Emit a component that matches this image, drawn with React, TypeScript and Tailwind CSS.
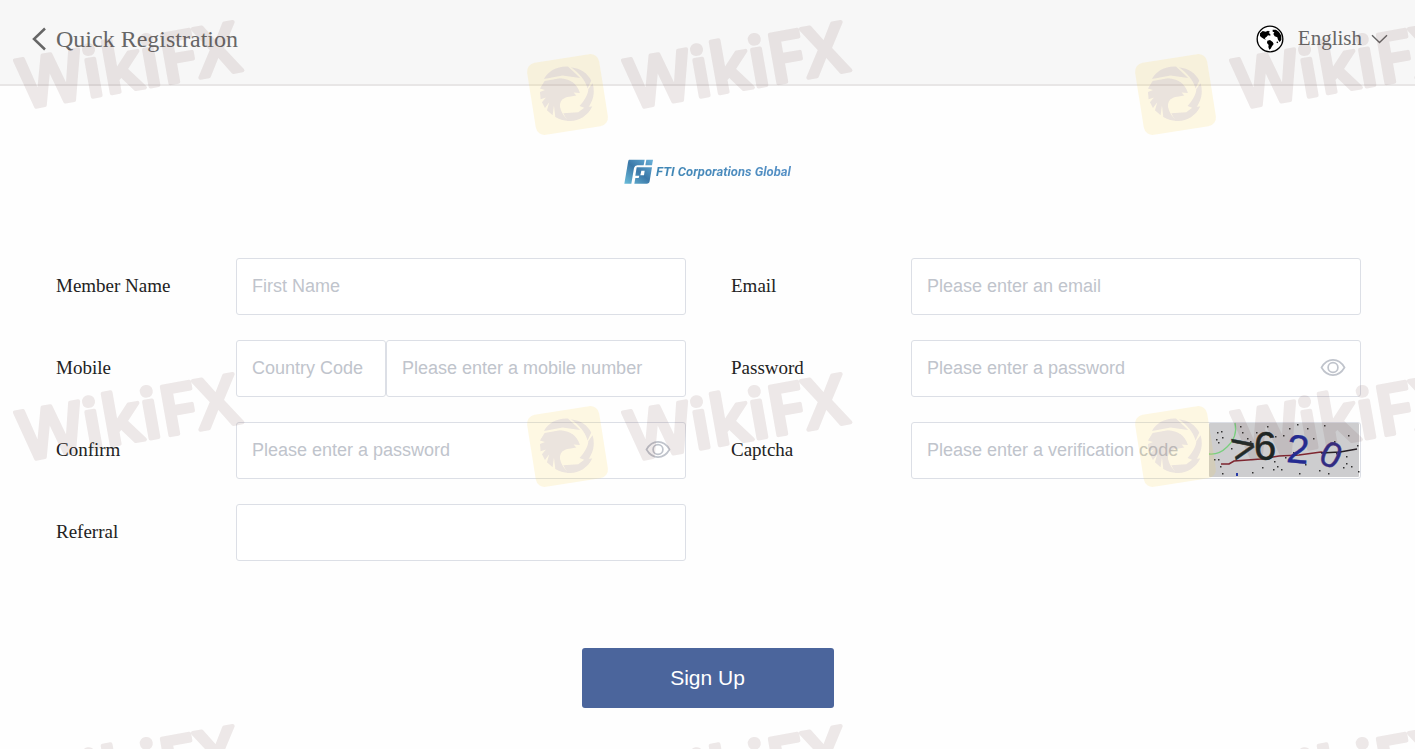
import type { ReactNode } from "react";

const serif = "font-['Liberation_Serif',serif]";
const sans = "font-['Liberation_Sans',sans-serif]";
const box = "flex h-[57px] min-w-0 items-stretch rounded-[3px] border border-[#dcdfe6] bg-white";
const field =
  "h-full w-full min-w-0 flex-1 bg-transparent pl-[15px] text-[18px] text-[#606266] outline-none placeholder:text-[#c0c4cc] font-['Liberation_Sans',sans-serif]";

function Row({ id, label, children }: { id: string; label: string; children: ReactNode }) {
  return (
    <div className="flex items-center">
      <label htmlFor={id} className={`w-[180px] shrink-0 text-[19px] text-[#222] ${serif}`}>
        {label}
      </label>
      <div className="flex min-w-0 flex-1">{children}</div>
    </div>
  );
}

function EyeButton() {
  return (
    <button type="button" aria-label="Show password" className="flex w-[54px] shrink-0 items-center justify-center pb-[2px]">
      <svg width="26" height="19" viewBox="0 0 26 19" fill="none" stroke="#c0c4cc" strokeWidth="1.700">
        <path d="M1.500 9.500C4.500 4.300 8.400 1.900 13 1.900s8.500 2.400 11.500 7.600C21.500 14.700 17.600 17.100 13 17.100S4.500 14.700 1.500 9.500Z" />
        <circle cx="13" cy="9.500" r="4.900" />
      </svg>
    </button>
  );
}

function Globe() {
  return (
    <svg width="28" height="28" viewBox="0 0 84 84" aria-hidden="true">
      <circle cx="42" cy="42" r="38.500" fill="#fff" stroke="#000" strokeWidth="4" />
      <path d="M12 25 20 18 29 20 36 17 42 20 38 24 43 27 43 32 36 31 32 35 26 40 30 44 24 42 16 37 12 33Z" />
      <path d="M34 47 42 45 50 51 53 57 48 64 44 71 40 74 37 66 38 60 33 54Z" />
      <path d="M50 14 60 14 69 21 76 32 76 45 71 51 66 44 64 37 56 34 52 27 55 22 50 20Z" />
      <circle cx="64" cy="52" r="2.500" />
    </svg>
  );
}

function BrandMark() {
  return (
    <svg width="30" height="26" viewBox="0 0 90 78" aria-hidden="true">
      <defs>
        <linearGradient id="mark" x1="0" y1="1" x2="1" y2="0">
          <stop offset="0" stopColor="#6bbdda" />
          <stop offset="0.500" stopColor="#3b78a8" />
          <stop offset="1" stopColor="#6ab2da" />
        </linearGradient>
      </defs>
      <path
        fill="url(#mark)"
        fillRule="evenodd"
        d="M15 2H62L59 19H40Q32 19 30 27L22 74H1L12 10Q13 2 15 2ZM67 2H87L84 19H64ZM38 25H84L77 66Q76 74 68 74H31L34 57H44L46 50H34ZM52 35 49 49H60L62 35Z"
      />
    </svg>
  );
}

const specks = [
  [8, 9], [12, 8], [7, 16], [13, 14], [9, 19], [31, 3], [33, 9], [38, 15], [41, 18], [47, 9], [58, 3], [66, 13],
  [74, 12], [80, 5], [88, 1], [98, 5], [115, 2], [104, 15], [125, 18], [139, 12], [127, 30], [137, 33], [148, 22],
  [65, 38], [68, 43], [72, 46], [64, 46], [76, 34], [11, 43], [13, 50], [5, 36], [9, 36], [43, 49], [110, 47],
  [119, 50], [142, 43], [137, 40], [149, 48], [90, 50], [84, 29], [22, 25], [53, 44], [134, 44], [96, 41],
];

function CaptchaImage() {
  return (
    <svg
      className="mr-px h-[54px] w-[150px] shrink-0 overflow-visible"
      viewBox="0 0 150 54"
      role="img"
      aria-label="Verification code"
      fontFamily="'Liberation Sans', sans-serif"
      textAnchor="middle"
    >
      <rect width="150" height="54" rx="1" fill="#cdcdcf" />
      <path d="M26 0Q29 14 18 24 10 32 0 31" fill="none" stroke="#79cf7e" strokeWidth="1.300" />
      {specks.map(([x, y]) => (
        <rect key={`${x}-${y}`} x={x} y={y} width="1.500" height="1.500" fill="#333" />
      ))}
      <path d="M12 41H20L25 38 52 36 70 33 90 32 112 29 116 30" fill="none" stroke="#7e2630" strokeWidth="1.700" />
      <path d="M112 30 131 29 148 26" fill="none" stroke="#262024" strokeWidth="1.500" />
      <text x="35" y="38" fontSize="42" fill="#222b29" stroke="#222b29" strokeWidth="0.500" transform="rotate(-12 36 26)">&gt;</text>
      <text x="56" y="37" fontSize="40" fill="#1c2523" stroke="#1c2523" strokeWidth="0.600">6</text>
      <text x="89" y="40" fontSize="40" fill="#242b91" stroke="#242b91" strokeWidth="0.400" transform="rotate(5 89 28)">2</text>
      <text x="122" y="44" fontSize="36" fill="#332c83" stroke="#332c83" strokeWidth="0.400" transform="rotate(24 122 32)">0</text>
      <rect x="27" y="50" width="2" height="3" fill="#263aa7" />
    </svg>
  );
}

function Watermark() {
  return (
    <svg className="pointer-events-none absolute inset-0 h-full w-full" aria-hidden="true">
      <defs>
        <pattern id="watermark" x="-88" y="0" width="608" height="352" patternUnits="userSpaceOnUse">
          <rect x="11" y="58" width="73" height="73" rx="9" fill="#f5cf45" opacity="0.150" transform="rotate(-9 47.500 94.500)" />
          <g transform="translate(-10 0) scale(0.333)" fill="#5038b0" opacity="0.110">
            <path d="M102 237C115 213 143 198 174 200L211 234 158 227Z" />
            <path d="M183 202C212 206 232 219 244 242L233 266C226 239 207 220 183 202Z" />
            <path d="M248 250C257 281 248 306 232 327L209 318C225 301 235 281 235 268Z" />
            <path d="M247 320C232 350 204 366 173 363L160 340 205 337 226 321Z" />
            <path d="M104 243 150 235C181 238 201 250 210 279L191 278 199 287 169 292C143 301 143 330 176 363 161 362 147 358 136 351L132 316 128 346 111 331 118 307 105 324 96 307 108 293 92 298 90 276 105 270 90 266Z" />
          </g>
          <text
            x="111"
            y="109"
            transform="rotate(-10 111 109)"
            fontFamily="'Open Sans', sans-serif"
            fontWeight="600"
            fontSize="69"
            fill="#5a2a28"
            stroke="#5a2a28"
            strokeWidth="4"
            strokeLinejoin="round"
            opacity="0.105"
          >
            WikiFX
          </text>
        </pattern>
      </defs>
      <rect width="100%" height="100%" fill="url(#watermark)" />
    </svg>
  );
}

export default function App() {
  return (
    <div className="relative min-h-screen overflow-hidden bg-[#fefefe]">
      <header
        className={`flex h-[86px] items-center justify-between border-b-2 border-[#e8e6e6] bg-[#f7f7f7] pb-[6px] pl-8 pr-[27px] text-[#666] ${serif}`}
      >
        <a href="#back" className="flex items-center gap-2 text-[24px]">
          <svg width="16" height="24" viewBox="0 0 16 24" fill="none" stroke="#666" strokeWidth="2.500" aria-hidden="true">
            <path d="M13 1.500 2 12 13 22.500" />
          </svg>
          <h1>Quick Registration</h1>
        </a>
        <div className="flex items-center">
          <Globe />
          <label className="ml-[14px] flex items-center gap-[9px]">
            <select aria-label="Language" className="field-sizing-content appearance-none bg-transparent text-[21px] outline-none">
              <option>English</option>
            </select>
            <svg width="17" height="10" viewBox="0 0 17 10" fill="none" stroke="#666" strokeWidth="1.400" aria-hidden="true">
              <path d="M1 1.200 8.500 8.500 16 1.200" />
            </svg>
          </label>
        </div>
      </header>

      <main>
        <div className="flex items-center justify-center gap-[2px] pt-[73px]">
          <BrandMark />
          <span className="whitespace-nowrap bg-linear-to-r from-[#3f86b4] to-[#5590c6] bg-clip-text font-['Roboto',sans-serif] text-[13px] leading-[18px] font-bold italic text-transparent">
            FTI Corporations Global
          </span>
        </div>

        <form onSubmit={(event) => event.preventDefault()} className="pt-[73px]">
          <div className="grid grid-cols-2 gap-x-[45px] gap-y-[25px] pl-14 pr-[54px]">
            <Row id="name" label="Member Name">
              <div className={`${box} flex-1`}>
                <input id="name" className={field} placeholder="First Name" />
              </div>
            </Row>
            <Row id="email" label="Email">
              <div className={`${box} flex-1`}>
                <input id="email" type="email" className={field} placeholder="Please enter an email" />
              </div>
            </Row>
            <Row id="mobile" label="Mobile">
              <div className={`${box} w-[150px] shrink-0`}>
                <input aria-label="Country Code" className={field} placeholder="Country Code" />
              </div>
              <div className={`${box} flex-1`}>
                <input id="mobile" type="tel" className={field} placeholder="Please enter a mobile number" />
              </div>
            </Row>
            <Row id="password" label="Password">
              <div className={`${box} flex-1`}>
                <input id="password" type="password" className={field} placeholder="Please enter a password" />
                <EyeButton />
              </div>
            </Row>
            <Row id="confirm" label="Confirm">
              <div className={`${box} flex-1`}>
                <input id="confirm" type="password" className={field} placeholder="Please enter a password" />
                <EyeButton />
              </div>
            </Row>
            <Row id="captcha" label="Captcha">
              <div className={`${box} flex-1`}>
                <input id="captcha" className={field} placeholder="Please enter a verification code" />
                <CaptchaImage />
              </div>
            </Row>
            <Row id="referral" label="Referral">
              <div className={`${box} flex-1`}>
                <input id="referral" className={field} />
              </div>
            </Row>
          </div>
          <div className="flex justify-center pb-10 pt-[87px]">
            <button type="submit" className={`h-[60px] w-[252px] rounded-[3px] bg-[#4b659c] text-[21px] text-white ${sans}`}>
              Sign Up
            </button>
          </div>
        </form>
      </main>

      <Watermark />
    </div>
  );
}
